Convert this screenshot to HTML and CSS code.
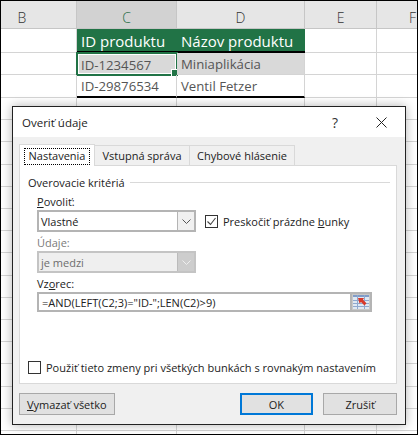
FILE: index.html
```html
<!DOCTYPE html>
<html lang="sk">
<head>
<meta charset="utf-8">
<title>Overiť údaje</title>
<link rel="stylesheet" href="styles.css">
</head>
<body>
<div class="screen">
  <div class="sheet">
    <div class="col-head col-b">B</div>
    <div class="col-head col-c">C</div>
    <div class="col-head">D</div>
    <div class="col-head">E</div>
    <div class="col-head">F</div>

    <div class="cell"></div>
    <div class="cell th">ID produktu</div>
    <div class="cell th">Názov produktu</div>
    <div class="cell"></div>
    <div class="cell"></div>

    <div class="cell"></div>
    <div class="cell sel">ID-1234567<span class="handle"></span></div>
    <div class="cell shade">Miniaplikácia</div>
    <div class="cell"></div>
    <div class="cell"></div>

    <div class="cell"></div>
    <div class="cell last">ID-29876534</div>
    <div class="cell last">Ventil Fetzer</div>
    <div class="cell"></div>
    <div class="cell"></div>

    <div class="filler"></div>
  </div>

  <div class="dialog">
    <div class="titlebar">
      <span class="title">Overiť údaje</span>
      <span class="help">?</span>
      <svg class="close" width="11" height="11" viewBox="0 0 11 11"><path d="M.5.5l10 10M10.5.5l-10 10" stroke="#222" fill="none"/></svg>
    </div>
    <div class="body">
      <div class="tabs">
        <div class="tab active"><span class="focus">Nastavenia</span></div>
        <div class="tab t2">Vstupná správa</div>
        <div class="tab t3">Chybové hlásenie</div>
      </div>
      <div class="panel">
        <div class="legend"><span>Overovacie kritériá</span><i class="rule"></i></div>
        <div class="fields">
          <div class="label"><u>P</u>ovoliť:</div>
          <div class="row">
            <div class="select"><span class="val">Vlastné</span><span class="arrow"><svg width="9" height="5" viewBox="0 0 9 5"><path d="M.5.5l4 4 4-4" stroke="#555" fill="none"/></svg></span></div>
            <label class="check"><span class="box"><svg width="13" height="13" viewBox="0 0 13 13"><path d="M2.5 6.5l3 3 5-6.5" stroke="#444" stroke-width="1.1" fill="none"/></svg></span><span>Preskočiť prázdne <u>b</u>unky</span></label>
          </div>
          <div class="label off lbl2">Údaje:</div>
          <div class="select disabled"><span class="val">je medzi</span><span class="arrow"><svg width="9" height="5" viewBox="0 0 9 5"><path d="M.5.5l4 4 4-4" stroke="#eee" fill="none"/></svg></span></div>
          <div class="label lbl3">Vz<u>o</u>rec:</div>
          <div class="formula">
            <span class="val">=AND(LEFT(C2;3)="ID-";LEN(C2)&gt;9)</span>
            <span class="refbtn"><svg width="16" height="14" viewBox="0 0 16 14"><rect width="16" height="14" fill="#dfe8f3"/><rect width="16" height="2" fill="#7f9cc8"/><path d="M0 5.500h16M0 8.500h16M0 11.500h16M4.500 0v14M11.500 0v14" stroke="#8fa9cf"/><path d="M5 3h6L10 4.800 13.500 8.300 11.500 10.500 8 7 6.500 8.500z" fill="#d8392b"/></svg></span>
          </div>
        </div>
        <label class="check apply"><span class="box"></span><span>Použiť tieto zmeny pri všetkých bunkách s rovnakým nastavením</span></label>
      </div>
      <div class="actions">
        <button class="btn clear"><u>V</u>ymazať všetko</button>
        <button class="btn ok">OK</button>
        <button class="btn cancel">Zrušiť</button>
      </div>
    </div>
  </div>
</div>
</body>
</html>
```
FILE: styles.css
```css
* { box-sizing: border-box; }
html, body { margin: 0; padding: 0; background: #fff; }
.screen {
  position: relative;
  width: 418px;
  height: 435px;
  border: 1px solid #000;
  overflow: hidden;
  font-family: "Open Sans", "Noto Sans", sans-serif;
}
.sheet {
  display: grid;
  grid-template-columns: 76px 100px 128px 72px 72px;
  grid-template-rows: 28px 24px 22px 23px 1fr;
  height: 100%;
  background: #fff;
}
.col-head {
  background: #e6e6e6;
  border-right: 1px solid #c6c6c6;
  border-bottom: 1px solid #c6c6c6;
  padding-top: 8px;
  text-align: center;
  font: 300 14px/18px "Open Sans", sans-serif;
  color: #333;
}
.col-b { padding-right: 33px; }
.col-c { background: #d2d2d2; color: #1d6b44; }
.cell {
  position: relative;
  border-right: 1px solid #d4d4d4;
  border-bottom: 1px solid #d4d4d4;
  padding-left: 4px;
  font-size: 13.2px;
  line-height: 21px;
  padding-top: 1px;
  color: #555;
  white-space: nowrap;
}
.th {
  background: #217346;
  color: #fff;
  font-size: 15px;
  padding-top: 2px;
  border-right: 0;
  border-bottom: 2px solid #000;
}
.shade { background: #d9d9d9; }
.sel {
  background: #d9d9d9;
  border: 1px solid #217346;
  outline: 1px solid #fff;
  outline-offset: -2px;
  padding-left: 3px;
  box-shadow: 0 0 0 1px #217346;
}
.handle {
  position: absolute;
  right: -3px;
  bottom: -3px;
  width: 6px;
  height: 6px;
  background: #217346;
  border: 1px solid #fff;
  box-sizing: content-box;
}
.last { border-bottom: 2px solid #000; }
.filler {
  grid-column: 1 / -1;
  background-image:
    repeating-linear-gradient(to bottom, transparent 0 21.2px, #d4d4d4 21.2px 22.2px),
    linear-gradient(#d4d4d4, #d4d4d4), linear-gradient(#d4d4d4, #d4d4d4), linear-gradient(#d4d4d4, #d4d4d4), linear-gradient(#d4d4d4, #d4d4d4);
  background-size: 100% 100%, 1px 100%, 1px 100%, 1px 100%, 1px 100%;
  background-position: 0 0, 75px 0, 175px 0, 303px 0, 375px 0;
  background-repeat: no-repeat;
}

.dialog {
  position: absolute;
  left: 11px;
  top: 105px;
  width: 394px;
  height: 319px;
  background: #f0f0f0;
  border: 1px solid #222;
  box-shadow: 0 0 10px rgba(0,0,0,.3);
  font-size: 11px;
  line-height: 15px;
  color: #222;
  display: flex;
  flex-direction: column;
}
.titlebar {
  height: 30px;
  flex: none;
  background: #fff;
  display: flex;
  align-items: center;
  padding: 0 18px 0 9px;
}
.title { font-size: 11.5px; flex: 1; }
.help { font-size: 14px; margin-right: 38px; color: #333; }
.body { flex: 1; padding: 7px 8px 0 6px; display: flex; flex-direction: column; }
.tabs { display: flex; height: 21px; flex: none; position: relative; z-index: 1; }
.tab {
  border: 1px solid #d9d9d9;
  border-left: 0;
  border-bottom: 0;
  height: 20px;
  margin-top: 1px;
  text-align: center;
  line-height: 19px;
  background: #f0f0f0;
}
.tab.active {
  width: 76px;
  height: 22px;
  margin-top: 0;
  background: #fff;
  border-left: 1px solid #d9d9d9;
  padding-top: 4px;
  line-height: 14px;
}
.focus { display: inline-block; outline: 1px dotted #000; padding: 0 4px; height: 15px; }
.t2 { width: 95px; }
.t3 { width: 105px; }
.panel {
  width: 378px;
  height: 219px;
  flex: none;
  background: #fff;
  border: 1px solid #d9d9d9;
  padding: 9px 6px 0 8px;
  display: flex;
  flex-direction: column;
}
.legend { display: flex; align-items: center; gap: 5px; height: 15px; }
.rule { flex: 1; height: 1px; background: #d9d9d9; }
.fields { padding-left: 9px; margin-top: 4px; flex: 1; }
.label { height: 15px; margin-bottom: 1px; }
.off { color: #7a7a7a; }
.lbl2 { margin-top: 3px; }
.lbl3 { margin-top: 3px; }
.row { display: flex; align-items: center; gap: 9px; }
.select {
  width: 159px;
  height: 22px;
  border: 2px solid #b4b4b4;
  background: #fff;
  display: flex;
  align-items: center;
  justify-content: space-between;
  padding-left: 2px;
  flex: none;
}
.arrow {
  width: 17px;
  height: 18px;
  border-left: 1px solid #b4b4b4;
  display: flex;
  align-items: center;
  justify-content: center;
  background: #f0f0f0;
}
.disabled { background: #efefef; color: #6d6d6d; border-color: #c4c4c4; }
.disabled .arrow { background: #cdcdcd; border-color: #bbb; }
.check { display: flex; align-items: center; gap: 5px; }
.box {
  width: 13px;
  height: 13px;
  border: 1px solid #333;
  background: #fff;
  display: block;
  flex: none;
}
.box svg { display: block; margin: -1px; }
.formula {
  width: 335px;
  height: 20px;
  border: 2px solid #b4b4b4;
  display: flex;
  align-items: center;
  justify-content: space-between;
  padding-left: 3px;
}
.refbtn {
  width: 22px;
  height: 20px;
  margin: -2px;
  background: #c8c8c8;
  border: 2px solid #b4b4b4;
  display: flex;
  align-items: center;
  justify-content: center;
}
.apply { margin-bottom: 8px; }
.actions { display: flex; margin-top: 9px; }
.btn {
  height: 22px;
  background: #e1e1e1;
  border: 1px solid #a8a8a8;
  font: inherit;
  color: #222;
  padding: 0;
}
.clear { width: 96px; margin-right: 125px; }
.ok { width: 74px; border: 2px solid #0078d7; margin-right: 10px; }
.cancel { width: 74px; }
```
